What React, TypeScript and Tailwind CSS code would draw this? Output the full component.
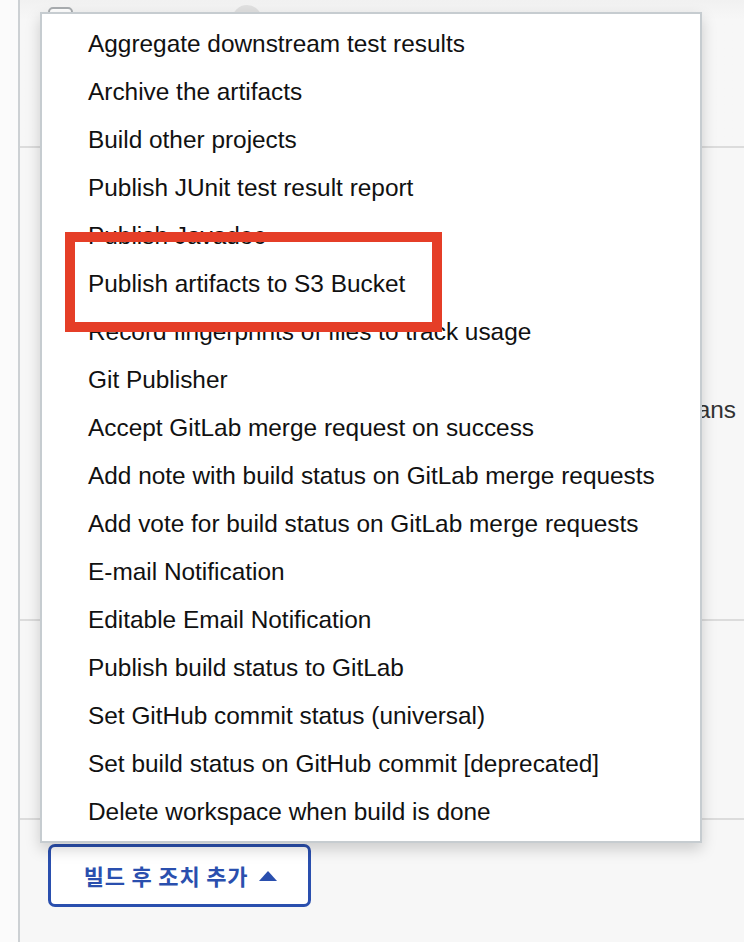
const items = [
  "Aggregate downstream test results",
  "Archive the artifacts",
  "Build other projects",
  "Publish JUnit test result report",
  "Publish Javadoc",
  "Publish artifacts to S3 Bucket",
  "Record fingerprints of files to track usage",
  "Git Publisher",
  "Accept GitLab merge request on success",
  "Add note with build status on GitLab merge requests",
  "Add vote for build status on GitLab merge requests",
  "E-mail Notification",
  "Editable Email Notification",
  "Publish build status to GitLab",
  "Set GitHub commit status (universal)",
  "Set build status on GitHub commit [deprecated]",
  "Delete workspace when build is done",
];

export default function App() {
  return (
    <div className="relative flex h-[942px] w-[744px] overflow-hidden bg-[#fbfbfb] font-['Liberation_Sans',Arial,sans-serif]">
      <div className="w-[18px] shrink-0 bg-[#fbfbfb]" />
      <div className="flex flex-1 flex-col border-l-2 border-[#cdd1d4] bg-[#f7f7f7]">
        {/* top section */}
        <div className="relative h-[146px] bg-gradient-to-b from-[#f1f1f1] to-[#f7f7f7] to-[20px]">
          <div className="flex items-start pl-[28px] pt-[7px]">
            <div className="h-[22px] w-[25px] rounded-[5px] border-2 border-[#a9adb0] bg-white" />
            <div className="ml-[159px] mt-[-2px] h-[30px] w-[30px] rounded-full bg-[#e0e0e0]" />
          </div>
        </div>
        <div className="h-[2px] bg-[#dcdcdc]" />
        <div className="flex h-[471px] items-start justify-end pr-[8px] pt-[248px]">
          <span className="text-[24.4px] leading-[28px] text-[#333]">Plans</span>
        </div>
        <div className="h-[2px] bg-[#dcdcdc]" />
        <div className="h-[197px]" />
        <div className="h-[2px] bg-[#dcdcdc]" />
        <div className="pl-[28px] pt-[24px]">
          <button
            type="button"
            className="flex h-[63px] w-[263px] items-center justify-center gap-[11px] rounded-[7px] border-[3px] border-[#2a4fae] bg-white pl-[2px] text-[#2a4fae]"
          >
            <span className="font-['Noto_Sans_CJK_KR',sans-serif] text-[22px] font-bold tracking-[0.8px]">
              빌드 후 조치 추가
            </span>
            <svg width="18" height="10" viewBox="0 0 18 10">
              <path d="M9 0 L18 10 L0 10 Z" fill="#2a4fae" />
            </svg>
          </button>
        </div>
      </div>

      {/* dropdown menu */}
      <div className="absolute left-[40px] top-[12px] h-[831px] w-[662px] border-2 border-[#c6ccd0] bg-white pt-[6px] shadow-[0_6px_14px_rgba(0,0,0,0.18)]">
        {items.map((item) => (
          <div key={item} className="flex h-[48px] items-center pl-[46px] text-[24.4px] text-[#111]">
            {item}
          </div>
        ))}
      </div>

      {/* highlight annotation */}
      <div className="absolute left-[65px] top-[232px] h-[100px] w-[377px] border-[10px] border-[#e53e27]" />
    </div>
  );
}
